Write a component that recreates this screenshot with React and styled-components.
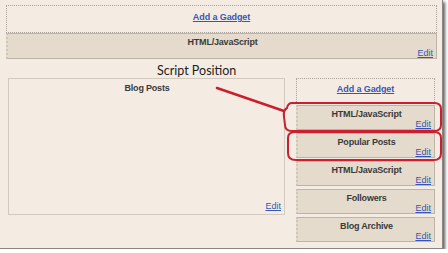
import React from "react";
import styled, { createGlobalStyle } from "styled-components";

const GlobalStyle = createGlobalStyle`
  html, body {
    margin: 0;
    padding: 0;
    background: #ffffff;
  }
  * {
    box-sizing: border-box;
  }
`

const Frame = styled.div`
  position: relative;
  width: 443px;
  height: 249px;
  background: #f4ece3;
  border-right: 1px solid #8a8580;
  border-bottom: 1px solid #8a8580;
  box-shadow: 2px 2px 3px rgba(40, 40, 40, 0.75);
  padding: 5px 5px 0 6px;
  font-family: "Liberation Sans", Arial, sans-serif;
  color: #333;
  display: flex;
  flex-direction: column;
`

const GadgetSlot = styled.div`
  height: ${(p) => p.h}px;
  border: 1px dotted #a9a39b;
  border-bottom: ${(p) => (p.open ? "none" : "1px dotted #a9a39b")};
  display: flex;
  justify-content: center;
  padding-top: ${(p) => p.pt}px;
`

const Link = styled.a`
  color: #3556b4;
  text-decoration: underline;
  font-size: 9px;
  line-height: ${(p) => (p.bold ? 11 : 9)}px;
  font-weight: ${(p) => (p.bold ? 700 : 400)};
  letter-spacing: ${(p) => (p.bold ? "-0.1px" : "0")};
  cursor: pointer;
`

const Widget = styled.div`
  height: ${(p) => p.h}px;
  background: #e4dbcc;
  border: 1px solid #bdb4a7;
  border-left: 2px dotted #cfc7ba;
  display: flex;
  flex-direction: column;
  padding: ${(p) => p.pt}px 3px 0 4px;
`

const WidgetTitle = styled.div`
  text-align: center;
  font-size: 9px;
  line-height: 11px;
  font-weight: 700;
  color: #3a3a3a;
  letter-spacing: -0.2px;
`

const EditRow = styled.div`
  margin-top: auto;
  align-self: stretch;
  display: flex;
  justify-content: flex-end;
`

const Row = styled.div`
  display: flex;
  margin-top: 5px;
  gap: 11px;
`

const MainColumn = styled.div`
  width: 277px;
  margin-left: 2px;
  display: flex;
  flex-direction: column;
`

const Heading = styled.div`
  height: 14px;
  padding-left: 149px;
  font-family: Lato, "Liberation Sans", sans-serif;
  font-size: 12.5px;
  line-height: 14px;
  color: #222;
`

const PostsBox = styled.div`
  height: 137px;
  border: 1px solid #d2cabe;
  display: flex;
  flex-direction: column;
  align-items: center;
  padding: 4px 3px 3px 4px;
`

const Sidebar = styled.div`
  width: 139px;
  margin-top: 14px;
  display: flex;
  flex-direction: column;
  gap: 3px;
`

const Annotations = styled.svg`
  position: absolute;
  left: 0;
  top: 0;
  pointer-events: none;
`

const sideWidgets = ["HTML/JavaScript", "Popular Posts", "HTML/JavaScript", "Followers", "Blog Archive"];

export default function App() {
  return (
    <>
      <GlobalStyle />
      <Frame>
        <GadgetSlot h={28} pt={6}>
          <Link bold>Add a Gadget</Link>
        </GadgetSlot>
        <Widget h={26} pt={3}>
          <WidgetTitle>HTML/JavaScript</WidgetTitle>
          <EditRow>
            <Link>Edit</Link>
          </EditRow>
        </Widget>
        <Row>
          <MainColumn>
            <Heading>Script Position</Heading>
            <PostsBox>
              <WidgetTitle>Blog Posts</WidgetTitle>
              <EditRow>
                <Link>Edit</Link>
              </EditRow>
            </PostsBox>
          </MainColumn>
          <Sidebar>
            <GadgetSlot h={24} pt={5} open>
              <Link bold>Add a Gadget</Link>
            </GadgetSlot>
            {sideWidgets.map((name, i) => (
              <Widget key={i} h={25} pt={3}>
                <WidgetTitle>{name}</WidgetTitle>
                <EditRow>
                  <Link>Edit</Link>
                </EditRow>
              </Widget>
            ))}
          </Sidebar>
        </Row>
        <Annotations width="448" height="253" viewBox="0 0 448 253">
          <g fill="none" stroke="#c8202e" strokeWidth="2" strokeLinecap="round" strokeLinejoin="round">
            <path d="M217 88 L284 111" strokeWidth="2.5" />
            <path d="M292 103 L434 103 Q441 103 441 109 L441 125 Q441 131 434 131 L292 131 Q285 131 285 125 L284 117 Q283 110 287 108 Q288 103 292 103 Z" />
            <path d="M295 132 L434 132 Q441 132 441 138 L441 153 Q441 160 434 160 L296 160 Q288 160 288 153 L288 138 Q288 132 295 132 Z" />
          </g>
        </Annotations>
      </Frame>
    </>
  );
}
